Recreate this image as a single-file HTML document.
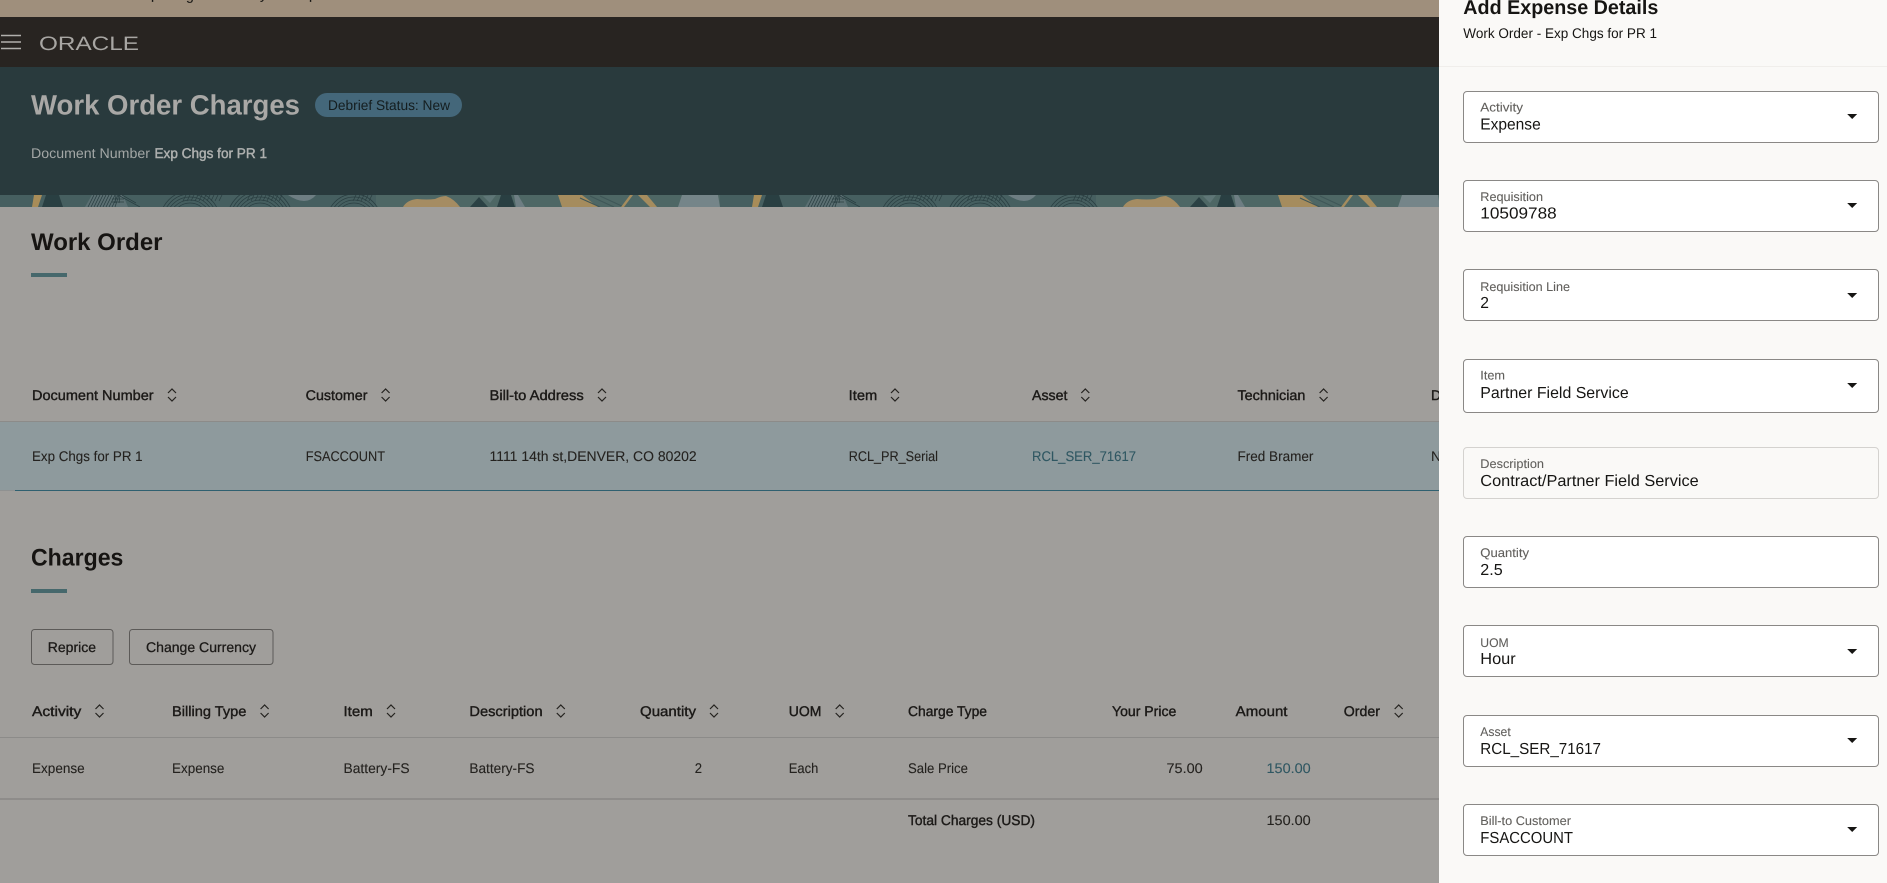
<!DOCTYPE html>
<html lang="en">
<head>
<meta charset="utf-8">
<title>Work Order Charges</title>
<style>
html,body{margin:0;padding:0;width:1887px;height:883px;overflow:hidden;background:#a09e9b}
svg{display:block;position:absolute;left:0;top:0}
text{font-family:"Liberation Sans",sans-serif;white-space:pre;text-rendering:geometricPrecision}
.th{font-size:14px;fill:#1c1a18;stroke:#1c1a18;stroke-width:.4px}
.td{font-size:14px;fill:#24221f;stroke:#24221f;stroke-width:.1px}
.lnk{font-size:14px;fill:#2f5762;stroke:#2f5762;stroke-width:.1px}
.h2{font-size:24px;font-weight:bold;fill:#161412}
.btn{font-size:14px;fill:#1c1a18;stroke:#1c1a18;stroke-width:.3px}
.lb{font-size:12.5px;fill:#615f5c;stroke:#615f5c;stroke-width:.1px}
.val{font-size:16px;fill:#161513}
.sort{fill:none;stroke:#24221f;stroke-width:1.2}
.fld{fill:#fff;stroke:#8a8886;stroke-width:1}
.fld2{fill:#faf9f7;stroke:#d4d2cf;stroke-width:1}
</style>
</head>
<body>
<svg width="1887" height="883" viewBox="0 0 1887 883" xmlns="http://www.w3.org/2000/svg">
<defs>
<pattern id="strip" x="0" y="195" width="720" height="12" patternUnits="userSpaceOnUse">
  <rect width="720" height="12" fill="#465f60"/>
  <rect x="376" width="344" height="12" fill="#4e6765"/>
  <polygon points="34,0 42,0 38,12 32,12" fill="#a88c58"/>
  <polygon points="46,0 59,0 63,12 42,12" fill="#293f42"/>
  <polygon points="92,0 123,0 128,12 85,12" fill="#5c7073"/>
  <g fill="none" stroke="#2a3f42" stroke-width=".8">
    <path d="M88 12l6-12M91 12l6-12M94 12l6-12M97 12l6-12M100 12l6-12M103 12l6-12M106 12l6-12M109 12l6-12M112 12l6-12M115 12l4-12"/>
    <path d="M116 0l-1 8M120 0l-1 8M112 4h12M112 7h12"/>
    <path d="M118 0l22 12M122 0l14 8"/>
    <circle cx="190" cy="26" r="18"/><circle cx="190" cy="26" r="21"/><circle cx="190" cy="26" r="24"/><circle cx="190" cy="26" r="27"/><circle cx="190" cy="26" r="30"/>
    <circle cx="260" cy="26" r="18"/><circle cx="260" cy="26" r="21"/><circle cx="260" cy="26" r="24"/><circle cx="260" cy="26" r="27"/><circle cx="260" cy="26" r="30"/><circle cx="260" cy="26" r="33"/>
    <circle cx="354" cy="26" r="18"/><circle cx="354" cy="26" r="21"/><circle cx="354" cy="26" r="24"/><circle cx="354" cy="26" r="27"/>
    <path d="M186 0l-3 6M190 0l-3 6M194 0l-3 6M198 0l-3 6M202 0l-3 6M206 0l-3 6M210 0l-3 6M214 0l-3 6M218 0l-3 6M222 0l-3 6"/>
    <path d="M250 0l-3 6M254 0l-3 6M258 0l-3 6M262 0l-3 6M266 0l-3 6M270 0l-3 6M274 0l-3 6M278 0l-3 6M282 0l-3 6"/>
    <path d="M356 0l-3 6M360 0l-3 6M364 0l-3 6M368 0l-3 6M372 0l-3 6"/>
  </g>
  <path d="M288 0h28q-5 6-12 6t-16-6z" fill="#6e7e83"/>
  <path d="M403 12q4-7 14-8 10 1 18 0 6-3 11-3 8 3 14 11z" fill="#a58c62"/>
  <polygon points="479,2 488,12 470,12" fill="#2b4144"/>
  <polygon points="483,1 496,0 490,8" fill="#5f7677"/>
  <polygon points="501,0 511,0 515,12 497,12" fill="#293f42"/>
  <polygon points="514,0 518,0 525,12 516,12" fill="#6e7e83"/>
  <polygon points="558,0 582,0 598,12 562,12" fill="#a58c5e"/>
  <path d="M580 3l20 9M590 1l24 11M600 1l24 11" stroke="#3f5758" stroke-width="1.2" fill="none"/>
  <polygon points="630,0 633,0 624,12 621,12" fill="#a58c5e"/>
  <polygon points="638,0 647,0 657,12 650,12" fill="#a58c5e"/>
  <polygon points="682,0 718,0 720,12 678,12" fill="#758589"/>
</pattern>
<g id="s"><path class="sort" d="M-4-2 0-6 4-2M-4 2 0 6 4 2"/></g>
<polygon id="a" points="0,0 10,0 5,5" fill="#161513"/>
</defs>

<!-- top bar -->
<rect width="1887" height="17" fill="#9f8f7c"/>
<text x="151" y="-1" class="td" style="fill:#161513">p</text>
<text x="186" y="0" class="td" style="fill:#161513">g</text>
<text x="260" y="-1" class="td" style="fill:#161513">y</text>
<text x="309" y="-1" class="td" style="fill:#161513">p</text>

<!-- header -->
<rect y="17" width="1887" height="50" fill="#282421"/>
<path d="M1 35.5h20M1 42h20M1 48.5h20" stroke="#b1afac" stroke-width="1.6" fill="none"/>
<text x="39" y="50" font-size="19.5" fill="#a8a6a3" textLength="100" lengthAdjust="spacingAndGlyphs">ORACLE</text>

<!-- hero -->
<rect y="67" width="1887" height="128" fill="#293a3d"/>
<rect y="195" width="1887" height="12" fill="url(#strip)"/>
<text x="31" y="114.5" font-size="28" font-weight="bold" fill="#a9a8a6" textLength="269" lengthAdjust="spacingAndGlyphs">Work Order Charges</text>
<rect x="315" y="93" width="147" height="24" rx="12" fill="#44677a"/>
<text x="328" y="110" font-size="14" fill="#141d1f" textLength="122" lengthAdjust="spacingAndGlyphs">Debrief Status: New</text>
<text x="31" y="158" font-size="14" fill="#a3a7a6" textLength="119" lengthAdjust="spacingAndGlyphs">Document Number</text>
<text x="154.5" y="158" font-size="14" fill="#aeb0af" stroke="#aeb0af" stroke-width=".45" textLength="112.5" lengthAdjust="spacingAndGlyphs">Exp Chgs for PR 1</text>

<!-- work order -->
<text class="h2" x="31" y="250" textLength="131.5" lengthAdjust="spacingAndGlyphs">Work Order</text>
<rect x="31" y="273" width="36" height="4" fill="#46686c"/>

<text class="th" x="32" y="400" textLength="121.6" lengthAdjust="spacingAndGlyphs">Document Number</text>
<use href="#s" x="172" y="395"/>
<text class="th" x="305.7" y="400" textLength="61.8" lengthAdjust="spacingAndGlyphs">Customer</text>
<use href="#s" x="385.6" y="395"/>
<text class="th" x="489.5" y="400" textLength="94.2" lengthAdjust="spacingAndGlyphs">Bill-to Address</text>
<use href="#s" x="602" y="395"/>
<text class="th" x="848.7" y="400" textLength="28.5" lengthAdjust="spacingAndGlyphs">Item</text>
<use href="#s" x="895" y="395"/>
<text class="th" x="1032" y="400" textLength="35.4" lengthAdjust="spacingAndGlyphs">Asset</text>
<use href="#s" x="1085.3" y="395"/>
<text class="th" x="1237.5" y="400" textLength="67.9" lengthAdjust="spacingAndGlyphs">Technician</text>
<use href="#s" x="1323.6" y="395"/>
<text class="th" x="1431" y="400">D</text>

<rect y="421" width="1440" height="1" fill="#8c8b89"/>
<rect y="422" width="1440" height="68" fill="#8e9a9d"/>
<rect y="490" width="15" height="1" fill="#8f9191"/>
<rect x="15" y="490" width="1425" height="1" fill="#2f6070"/>

<text class="td" x="32" y="461" textLength="110.6" lengthAdjust="spacingAndGlyphs">Exp Chgs for PR 1</text>
<text class="td" x="305.7" y="461" textLength="79.3" lengthAdjust="spacingAndGlyphs">FSACCOUNT</text>
<text class="td" x="489.5" y="461" textLength="207.2" lengthAdjust="spacingAndGlyphs">1111 14th st,DENVER, CO 80202</text>
<text class="td" x="848.7" y="461" textLength="89.3" lengthAdjust="spacingAndGlyphs">RCL_PR_Serial</text>
<text class="lnk" x="1032" y="461" textLength="104" lengthAdjust="spacingAndGlyphs">RCL_SER_71617</text>
<text class="td" x="1237.5" y="461" textLength="75.9" lengthAdjust="spacingAndGlyphs">Fred Bramer</text>
<text class="td" x="1431" y="461">N</text>

<!-- charges -->
<text class="h2" x="31" y="565.5" textLength="92.4" lengthAdjust="spacingAndGlyphs">Charges</text>
<rect x="31" y="589" width="36" height="4" fill="#46686c"/>

<rect x="31.5" y="629.5" width="81.5" height="35" rx="3" fill="none" stroke="#5c5a58"/>
<text class="btn" x="47.8" y="652" textLength="48.2" lengthAdjust="spacingAndGlyphs">Reprice</text>
<rect x="129.5" y="629.5" width="143.5" height="35" rx="3" fill="none" stroke="#5c5a58"/>
<text class="btn" x="146" y="652" textLength="110" lengthAdjust="spacingAndGlyphs">Change Currency</text>

<text class="th" x="32" y="716" textLength="49.3" lengthAdjust="spacingAndGlyphs">Activity</text>
<use href="#s" x="99.5" y="711"/>
<text class="th" x="172" y="716" textLength="74.4" lengthAdjust="spacingAndGlyphs">Billing Type</text>
<use href="#s" x="264.6" y="711"/>
<text class="th" x="343.5" y="716" textLength="29.2" lengthAdjust="spacingAndGlyphs">Item</text>
<use href="#s" x="391" y="711"/>
<text class="th" x="469.4" y="716" textLength="73.2" lengthAdjust="spacingAndGlyphs">Description</text>
<use href="#s" x="560.8" y="711"/>
<text class="th" x="640" y="716" textLength="56" lengthAdjust="spacingAndGlyphs">Quantity</text>
<use href="#s" x="714" y="711"/>
<text class="th" x="788.8" y="716" textLength="32.6" lengthAdjust="spacingAndGlyphs">UOM</text>
<use href="#s" x="839.7" y="711"/>
<text class="th" x="908" y="716" textLength="79" lengthAdjust="spacingAndGlyphs">Charge Type</text>
<text class="th" x="1112" y="716" textLength="64.3" lengthAdjust="spacingAndGlyphs">Your Price</text>
<text class="th" x="1235.7" y="716" textLength="51.8" lengthAdjust="spacingAndGlyphs">Amount</text>
<text class="th" x="1343.8" y="716" textLength="36.2" lengthAdjust="spacingAndGlyphs">Order</text>
<use href="#s" x="1398.7" y="711"/>

<rect y="737" width="1440" height="1" fill="#8c8b89"/>
<text class="td" x="32" y="773" textLength="52.7" lengthAdjust="spacingAndGlyphs">Expense</text>
<text class="td" x="172" y="773" textLength="52.4" lengthAdjust="spacingAndGlyphs">Expense</text>
<text class="td" x="343.5" y="773" textLength="66.1" lengthAdjust="spacingAndGlyphs">Battery-FS</text>
<text class="td" x="469.4" y="773" textLength="65.1" lengthAdjust="spacingAndGlyphs">Battery-FS</text>
<text class="td" x="694.7" y="773" textLength="7.3" lengthAdjust="spacingAndGlyphs">2</text>
<text class="td" x="788.8" y="773" textLength="29.5" lengthAdjust="spacingAndGlyphs">Each</text>
<text class="td" x="908" y="773" textLength="59.9" lengthAdjust="spacingAndGlyphs">Sale Price</text>
<text class="td" x="1166.5" y="773" textLength="36.2" lengthAdjust="spacingAndGlyphs">75.00</text>
<text class="lnk" x="1266.5" y="773" textLength="44.2" lengthAdjust="spacingAndGlyphs">150.00</text>

<rect y="798" width="1440" height="2" fill="#8e8c8a"/>
<text class="th" x="908" y="825" textLength="127" lengthAdjust="spacingAndGlyphs">Total Charges (USD)</text>
<text class="td" x="1266.5" y="825" textLength="44.2" lengthAdjust="spacingAndGlyphs">150.00</text>

<!-- panel -->
<rect x="1439" width="448" height="883" fill="#faf9f7"/>
<text x="1463.3" y="14" font-size="20" font-weight="bold" fill="#161513" textLength="195" lengthAdjust="spacingAndGlyphs">Add Expense Details</text>
<text x="1463.3" y="38" font-size="14" fill="#161513" textLength="193.7" lengthAdjust="spacingAndGlyphs">Work Order - Exp Chgs for PR 1</text>
<rect x="1439" y="66" width="448" height="1" fill="#f0eeeb"/>

<rect class="fld" x="1463.5" y="91.5" width="415" height="51" rx="3.5"/>
<text class="lb" x="1480.3" y="111.7" textLength="42.7" lengthAdjust="spacingAndGlyphs">Activity</text>
<text class="val" x="1480.3" y="129.7" textLength="60.4" lengthAdjust="spacingAndGlyphs">Expense</text>
<use href="#a" x="1847.2" y="114"/>

<rect class="fld" x="1463.5" y="180.5" width="415" height="51" rx="3.5"/>
<text class="lb" x="1480.3" y="201" textLength="62.7" lengthAdjust="spacingAndGlyphs">Requisition</text>
<text class="val" x="1480.3" y="218.7" textLength="76.4" lengthAdjust="spacingAndGlyphs">10509788</text>
<use href="#a" x="1847.2" y="203"/>

<rect class="fld" x="1463.5" y="269.5" width="415" height="51" rx="3.5"/>
<text class="lb" x="1480.3" y="291" textLength="89.7" lengthAdjust="spacingAndGlyphs">Requisition Line</text>
<text class="val" x="1480.3" y="308" textLength="8.7" lengthAdjust="spacingAndGlyphs">2</text>
<use href="#a" x="1847.2" y="293"/>

<rect class="fld" x="1463.5" y="359.5" width="415" height="53" rx="3.5"/>
<text class="lb" x="1480.3" y="379.7" textLength="24.7" lengthAdjust="spacingAndGlyphs">Item</text>
<text class="val" x="1480.3" y="398" textLength="148.4" lengthAdjust="spacingAndGlyphs">Partner Field Service</text>
<use href="#a" x="1847.2" y="383"/>

<rect class="fld2" x="1463.5" y="447.5" width="415" height="51" rx="3.5"/>
<text class="lb" x="1480.3" y="468" textLength="63.7" lengthAdjust="spacingAndGlyphs">Description</text>
<text class="val" x="1480.3" y="486" textLength="218.4" lengthAdjust="spacingAndGlyphs">Contract/Partner Field Service</text>

<rect class="fld" x="1463.5" y="536.5" width="415" height="51" rx="3.5"/>
<text class="lb" x="1480.3" y="557" textLength="48.7" lengthAdjust="spacingAndGlyphs">Quantity</text>
<text class="val" x="1480.3" y="575" textLength="22.4" lengthAdjust="spacingAndGlyphs">2.5</text>

<rect class="fld" x="1463.5" y="625.5" width="415" height="51" rx="3.5"/>
<text class="lb" x="1480.3" y="647" textLength="28.4" lengthAdjust="spacingAndGlyphs">UOM</text>
<text class="val" x="1480.3" y="664" textLength="35.4" lengthAdjust="spacingAndGlyphs">Hour</text>
<use href="#a" x="1847.2" y="649"/>

<rect class="fld" x="1463.5" y="715.5" width="415" height="51" rx="3.5"/>
<text class="lb" x="1480.3" y="736" textLength="30.4" lengthAdjust="spacingAndGlyphs">Asset</text>
<text class="val" x="1480.3" y="754" textLength="120.7" lengthAdjust="spacingAndGlyphs">RCL_SER_71617</text>
<use href="#a" x="1847.2" y="738"/>

<rect class="fld" x="1463.5" y="804.5" width="415" height="51" rx="3.5"/>
<text class="lb" x="1480.3" y="825" textLength="90.7" lengthAdjust="spacingAndGlyphs">Bill-to Customer</text>
<text class="val" x="1480.3" y="843" textLength="92.7" lengthAdjust="spacingAndGlyphs">FSACCOUNT</text>
<use href="#a" x="1847.2" y="827"/>
</svg>
</body>
</html>
